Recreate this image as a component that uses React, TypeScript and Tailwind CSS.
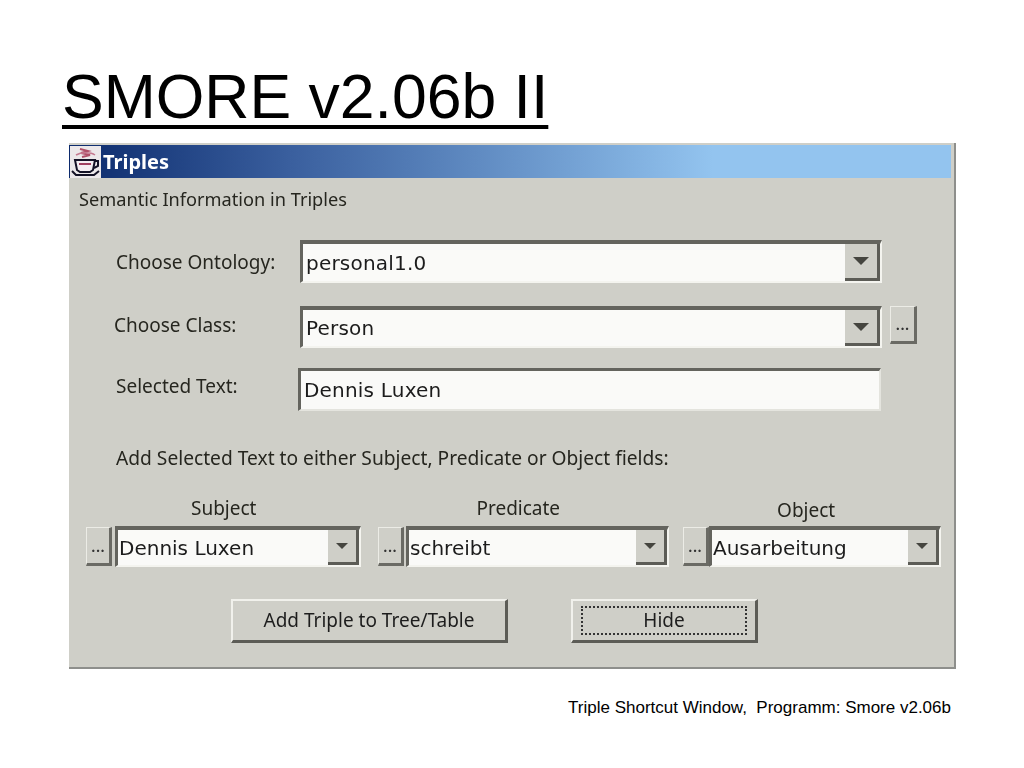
const ui = { fontFamily: '"Noto Sans", "DejaVu Sans", sans-serif' };

function Arrow({ big }: { big?: boolean }) {
  return (
    <svg width={big ? 16 : 12} height={big ? 8 : 6} viewBox="0 0 16 8">
      <path d="M0 0h16L8 8z" fill="#45453f" />
    </svg>
  );
}

function Combo({ value, big, className }: { value: string; big?: boolean; className: string }) {
  return (
    <div className={`flex border-t-[4px] border-l-[3px] border-[#64645e] border-b-[2px] border-r-[2px] border-b-[#f4f4ef] border-r-[#f4f4ef] bg-[#fafaf8] ${className}`}>
      <div className={`flex-1 min-w-0 flex items-center font-['DejaVu_Sans'] text-[#1c1c1c] ${big ? "pl-[3px] text-[20px] tracking-[0.2px]" : "pl-[1px] text-[20px]"}`}>
        {value}
      </div>
      <div className={`flex items-center justify-center bg-[#cfcfc8] border-r-[3px] border-b-[3px] border-[#5c5c56] ${big ? "w-[35px]" : "w-[31px]"}`}>
        <Arrow big={big} />
      </div>
    </div>
  );
}

function Dots({ className }: { className: string }) {
  return (
    <div className={`flex items-center justify-center bg-[#cfcfc8] border-t border-l border-[#ecece6] border-r-[3px] border-b-[3px] border-r-[#6a6a64] border-b-[#6a6a64] text-[17px] font-medium text-[#333] ${className}`}>
      ...
    </div>
  );
}

function Push({ label, focus, className }: { label: string; focus?: boolean; className: string }) {
  return (
    <div className={`flex py-[5px] px-[8px] bg-[#cfcfc8] border-t-2 border-l-2 border-[#f1f1ec] border-r-[3px] border-b-[3px] border-r-[#5c5c56] border-b-[#5c5c56] ${className}`}>
      <div className={`flex-1 flex items-center justify-center pb-[2px] text-[19px] text-[#1d1d1d] ${focus ? "border-2 border-dotted border-[#333]" : ""}`}>
        {label}
      </div>
    </div>
  );
}

export default function App() {
  return (
    <div className="w-[1024px] h-[768px] overflow-hidden bg-white font-['Liberation_Sans']">
      <h1 className="pt-[58px] pl-[62px] text-[62.5px] leading-[76px] text-black underline decoration-[4px] underline-offset-[7px]">
        SMORE v2.06b II
      </h1>

      <div style={ui} className="ml-[69px] mt-[9px] w-[887px] h-[526px] bg-[#cfcfc8] border-r-[2px] border-b-[2px] border-[#8e8f8c] blur-[0.6px] flex flex-col">
        <div className="mt-[2px] mr-[3px] h-[33px] flex items-center pl-[1px] bg-gradient-to-r from-[#0c2a6c] via-[#3a5f9e] via-25% to-[#93c4ef] to-73% text-white font-bold text-[20px]">
          <svg width="31" height="32" viewBox="0 0 31 32" className="bg-[#ece8ea]">
            <path d="M10 3l8 2-7 2 9 2-8 2" fill="none" stroke="#b0506a" strokeWidth="2" />
            <path d="M6 9c5-3 15-3 19 0" fill="none" stroke="#c57a90" strokeWidth="1.5" />
            <path d="M5 14h20l-2 10-3 2H10l-3-2z" fill="#f4eef2" stroke="#141226" strokeWidth="2" />
            <path d="M25 15h3v5l-4 2" fill="none" stroke="#141226" strokeWidth="2" />
            <path d="M2 25l4 4h18l5-4" fill="none" stroke="#141226" strokeWidth="2" />
            <path d="M9 18h12" stroke="#a04060" strokeWidth="2" />
          </svg>
          <span className="ml-[2px]">Triples</span>
        </div>

        <div className="text-[#26261f] text-[19px] leading-[24px]">
          <div className="pl-[10px] mt-[9px] text-[18.2px]">Semantic Information in Triples</div>

          <div className="flex items-center mt-[29px] h-[43px]">
            <span className="w-[231px] pl-[47px]">Choose Ontology:</span>
            <Combo big value="personal1.0" className="w-[582px] h-[43px]" />
          </div>

          <div className="flex items-center mt-[23px] h-[42px]">
            <span className="w-[231px] pl-[45px] -mt-[4px]">Choose Class:</span>
            <Combo big value="Person" className="w-[582px] h-[42px]" />
            <Dots className="ml-[8px] w-[27px] h-[38px] -mt-[4px]" />
          </div>

          <div className="flex items-center mt-[20px] h-[43px]">
            <span className="w-[229px] pl-[47px] -mt-[8px]">Selected Text:</span>
            <div className="w-[583px] h-[43px] pl-[3px] flex items-center bg-[#fafaf8] border-t-[3px] border-l-[3px] border-[#64645e] border-b-2 border-r-2 border-b-[#e4e4de] border-r-[#e4e4de] font-['DejaVu_Sans'] text-[20px] tracking-[0.2px] text-[#1c1c1c]">
              Dennis Luxen
            </div>
          </div>

          <div className="pl-[47px] mt-[35px] text-[19.2px]">Add Selected Text to either Subject, Predicate or Object fields:</div>

          <div className="flex mt-[26px] h-[24px]">
            <span className="ml-[122px]">Subject</span>
            <span className="ml-[220px]">Predicate</span>
            <span className="ml-[217px] mt-[2px]">Object</span>
          </div>

          <div className="flex mt-[6px] pl-[17px]">
            <Dots className="w-[26px] h-[39px] mt-[1px]" />
            <Combo value="Dennis Luxen" className="ml-[3px] w-[246px] h-[41px]" />
            <Dots className="ml-[17px] w-[26px] h-[39px] mt-[1px]" />
            <Combo value="schreibt" className="ml-[2px] w-[263px] h-[41px]" />
            <Dots className="ml-[14px] w-[26px] h-[39px] mt-[1px]" />
            <Combo value="Ausarbeitung" className="w-[232px] h-[41px]" />
          </div>

          <div className="flex mt-[32px] pl-[162px]">
            <Push label="Add Triple to Tree/Table" className="w-[277px] h-[44px]" />
            <Push focus label="Hide" className="ml-[63px] w-[187px] h-[44px]" />
          </div>
        </div>
      </div>

      <div className="mt-[28px] pr-[73px] text-right text-[17px] leading-[22px] text-black whitespace-pre">
        Triple Shortcut Window,  Programm: Smore v2.06b
      </div>
    </div>
  );
}
